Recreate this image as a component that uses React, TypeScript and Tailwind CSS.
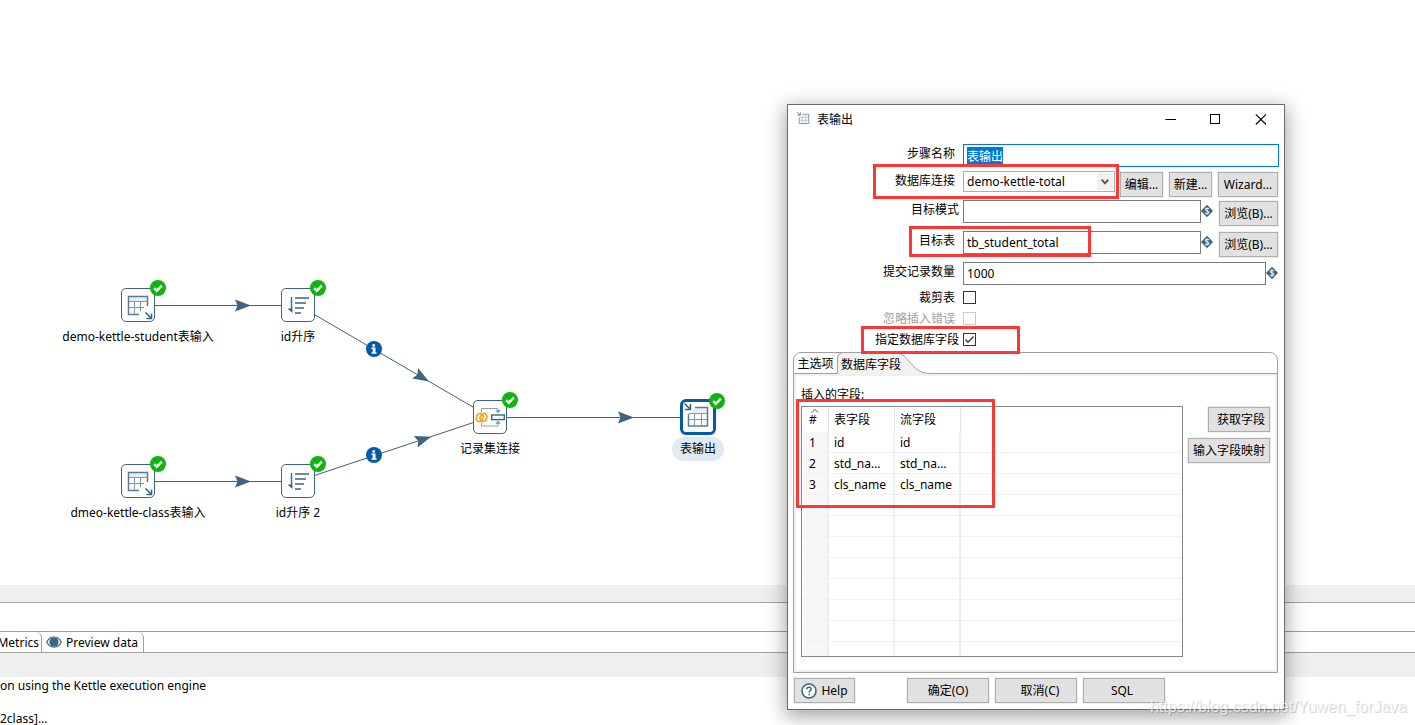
import { useEffect, useRef, type ReactNode } from "react";

const STEEL = "#3d6480";

function StatusBadge() {
  return (
    <svg className="absolute -top-[9px] -right-3 size-4" viewBox="0 0 16 16" aria-hidden="true">
      <circle cx="8" cy="8" r="8" fill="#0fb312" />
      <path d="M4.2 8.2l2.6 2.5 5-5" fill="none" stroke="#fff" strokeWidth="2.4" />
    </svg>
  );
}

function TableInputIcon() {
  return (
    <svg className="size-8" viewBox="0 0 32 32" fill="none" aria-hidden="true">
      <rect x="6.5" y="7.5" width="19" height="5" fill="#e9f1f7" />
      <path d="M17 25.500H6.500V7.500H25.500V17" stroke="#5c7b93" strokeWidth="1.500" />
      <path d="M7 12.500h18M7 18.500h15M12.500 13v12M18.500 13v9" stroke="#7f98ab" />
      <path d="M23.500 23.500l5 5M29.500 24.500v5h-5" stroke={STEEL} strokeWidth="1.600" />
    </svg>
  );
}

function TableOutputIcon({ className }: { className: string }) {
  return (
    <svg className={className} viewBox="0 0 32 32" fill="none" aria-hidden="true">
      <path d="M13 6.500h13v6H9z" fill="#e9f1f7" />
      <path d="M13 6.500h12.500v18.500h-19V13" stroke="#5c7b93" strokeWidth="1.500" />
      <path d="M7 12.500h18M7 18.500h18M12.500 13v12M19.500 13v12" stroke="#7f98ab" />
      <path d="M2.500 2.500l5 5M8.500 3v5.500H3" stroke={STEEL} strokeWidth="1.600" />
    </svg>
  );
}

function SortIcon() {
  return (
    <svg className="size-8" viewBox="0 0 32 32" fill="none" aria-hidden="true">
      <path d="M9.500 8v14" stroke={STEEL} strokeWidth="1.400" />
      <path d="M5.500 19.500h4.800v4.500z" fill={STEEL} />
      <path d="M13 9h14M13 14h11M13 19h9M13 24h6" stroke={STEEL} strokeWidth="1.500" />
    </svg>
  );
}

function JoinIcon() {
  return (
    <svg className="size-8" viewBox="0 0 32 32" fill="none" aria-hidden="true">
      <path d="M7.500 11V7.500H24V10M7.500 22v3H24v-3" stroke="#8ba3b5" />
      <path d="M22 9.500l2 2.500 2-2.500zM22 22.500l2-2.500 2 2.500z" fill="#8ba3b5" stroke="#8ba3b5" />
      <rect x="17.700" y="14" width="12.600" height="4.600" stroke={STEEL} strokeWidth="1.400" />
      <ellipse cx="5.700" cy="16.500" rx="3.300" ry="4.200" stroke="#f7a427" strokeWidth="1.800" transform="rotate(20 5.700 16.500)" />
      <ellipse cx="9.500" cy="16.500" rx="3.300" ry="4.200" stroke="#f7a427" strokeWidth="1.800" transform="rotate(20 9.500 16.500)" />
    </svg>
  );
}

function StepNode({ place, label, selected, children }: { place: string; label: string; selected?: boolean; children: ReactNode }) {
  return (
    <div className={`absolute flex w-44 -translate-x-1/2 flex-col items-center ${place}`}>
      <div
        className={
          selected
            ? "relative flex size-9 items-center justify-center rounded-md border-[3px] border-[#005ca8] bg-white"
            : "relative flex size-[34px] items-center justify-center rounded-[5px] border border-[#3d6480] bg-white"
        }
      >
        {children}
        <StatusBadge />
      </div>
      <span className={selected ? "mt-0.5 rounded-full bg-[#e0eaf4] px-2 leading-6" : "mt-1 leading-[22px]"}>{label}</span>
    </div>
  );
}

function Arrow({ x, y, angle }: { x: number; y: number; angle: number }) {
  return <path d="M0 0L-16 -6L-13.500 0L-16 6Z" fill={STEEL} transform={`translate(${x} ${y}) rotate(${angle})`} />;
}

function InfoDot({ x, y }: { x: number; y: number }) {
  return (
    <g transform={`translate(${x} ${y})`}>
      <circle r="8" fill="#005ca8" />
      <circle cx="-.3" cy="-3.500" r="1.400" fill="#fff" />
      <path d="M-2.500 -1.500h4v4.700h1v1.500h-5v-1.500h1.200v-3.200h-1.200z" fill="#fff" />
    </g>
  );
}

function Canvas() {
  return (
    <section className="relative grow">
      <svg className="absolute inset-0 h-full w-full" fill="none" aria-hidden="true">
        <g stroke={STEEL}>
          <path d="M138 305.500H298M138 481.500H298M490 417.500H698" />
          <path d="M298 305L490 417M298 481L490 417" />
        </g>
        <Arrow x={251} y={305.5} angle={0} />
        <Arrow x={251} y={481.5} angle={0} />
        <Arrow x={634} y={417.5} angle={0} />
        <Arrow x={429} y={381.5} angle={30.3} />
        <Arrow x={431} y={436.7} angle={-18.4} />
        <InfoDot x={374} y={349} />
        <InfoDot x={374} y={455} />
      </svg>
      <StepNode place="left-[138px] top-[288px]" label="demo-kettle-student表输入"><TableInputIcon /></StepNode>
      <StepNode place="left-[298px] top-[288px]" label="id升序"><SortIcon /></StepNode>
      <StepNode place="left-[138px] top-[464px]" label="dmeo-kettle-class表输入"><TableInputIcon /></StepNode>
      <StepNode place="left-[298px] top-[464px]" label="id升序 2"><SortIcon /></StepNode>
      <StepNode place="left-[490px] top-[400px]" label="记录集连接"><JoinIcon /></StepNode>
      <StepNode place="left-[698px] top-[399px]" label="表输出" selected><TableOutputIcon className="size-8 shrink-0" /></StepNode>
    </section>
  );
}

function ResultsPanel() {
  return (
    <section>
      <div className="h-[17px] bg-[#efefef]" />
      <div className="h-[29px] border-t border-[#a0a0a0]" />
      <div className="flex h-[22px] border-y border-[#a0a0a0]">
        <button className="flex w-[42px] items-center justify-end rounded-tr-md border-r border-[#a0a0a0] pt-0.5 pr-0.5">Metrics</button>
        <button className="flex items-center gap-1 rounded-tr-md border-r border-[#a0a0a0] pt-0.5 pr-[5px] pl-1">
          <svg className="mb-0.5 h-3 w-4" viewBox="0 0 16 12" aria-hidden="true">
            <path d="M.700 6C4-.700 12-.700 15.300 6C12 12.700 4 12.700 .700 6z" fill="#fff" stroke={STEEL} strokeWidth="1.200" />
            <circle cx="8" cy="6" r="4.600" fill={STEEL} />
          </svg>
          Preview data
        </button>
      </div>
      <div className="h-6 bg-[#efefef]" />
      <div className="flex h-12 flex-col gap-[18px]">
        <p className="leading-[18px]">on using the Kettle execution engine</p>
        <p className="leading-3">2class]...</p>
      </div>
    </section>
  );
}

function WinButton({ className = "", children }: { className?: string; children: ReactNode }) {
  return (
    <button className={`flex h-[25px] shrink-0 items-center justify-center border border-[#adadad] bg-[#e1e1e1] whitespace-nowrap shadow-[0_0_0_1px_#f0f0f0] ${className}`}>
      {children}
    </button>
  );
}

function Label({ id, wide, muted, children }: { id: string; wide?: boolean; muted?: boolean; children: ReactNode }) {
  return (
    <label htmlFor={id} className={`w-[175px] shrink-0 text-right leading-5 ${wide ? "pr-1" : "pr-2"} ${muted ? "text-[#a0a0a0]" : ""}`}>
      {children}
    </label>
  );
}

function VariableIcon() {
  return (
    <svg className="mt-1 h-3.5 w-3 shrink-0" viewBox="0 0 12 14" aria-hidden="true">
      <path d="M6 .800L12 7L6 13.200L0 7z" fill={STEEL} />
      <path d="M8 5.100C7.400 4 4.300 4 4.300 5.600C4.300 7.300 7.900 6.500 7.900 8.400C7.900 10 4.500 10 3.900 8.800M6 3.300v7.400" fill="none" stroke="#dfe8ef" strokeWidth="1.100" />
    </svg>
  );
}

const field = "h-[23px] min-w-0 flex-1 border border-[#7a7a7a] bg-white px-[3px] outline-none";

function Check({ id, label, checked, disabled, wide }: { id: string; label: string; checked?: boolean; disabled?: boolean; wide?: boolean }) {
  return (
    <div className="flex h-[21px] items-center">
      <Label id={id} wide={wide} muted={disabled}>{label}</Label>
      <span className="relative size-[13px]">
        <input
          id={id}
          type="checkbox"
          defaultChecked={checked}
          disabled={disabled}
          className="peer block size-[13px] appearance-none border border-[#333] bg-white disabled:border-[#ccc]"
        />
        <svg className="pointer-events-none absolute inset-0 hidden size-[13px] peer-checked:block" viewBox="0 0 13 13" fill="none" aria-hidden="true">
          <path d="M2.500 6.500L5 9.200L10.500 3.500" stroke="#333" strokeWidth="1.300" />
        </svg>
      </span>
    </div>
  );
}

const rows = [
  ["1", "id", "id"],
  ["2", "std_na...", "std_na..."],
  ["3", "cls_name", "cls_name"],
  ...Array.from({ length: 8 }, () => ["", "", ""]),
];

function FieldTable() {
  return (
    <div className="h-[251px] w-[382px] overflow-hidden border border-[#828790] px-px">
      <table className="w-full table-fixed border-separate border-spacing-0 text-left">
        <colgroup>
          <col className="w-[26px]" />
          <col className="w-[66px]" />
          <col className="w-[66px]" />
          <col />
        </colgroup>
        <thead>
          <tr className="h-[25px]">
            <th className="relative border-r border-[#e5e5e5] pl-1.5 font-normal">
              #
              <svg className="absolute top-0.5 left-2 h-1 w-2" viewBox="0 0 8 4" fill="none" aria-hidden="true">
                <path d="M.500 3.700L4 .500L7.500 3.700" stroke="#555" />
              </svg>
            </th>
            <th className="border-r border-[#e5e5e5] pl-[5px] font-normal">表字段</th>
            <th className="border-r border-[#e5e5e5] pl-[5px] font-normal">流字段</th>
            <th />
          </tr>
        </thead>
        <tbody>
          {rows.map(([index, column, stream], i) => (
            <tr key={i} className="h-[21px]">
              <td className="border-r-2 border-b border-r-[#e9eff8] border-b-[#f0f0f0] bg-[#f7f7f7] p-0 pt-0.5 pl-1.5">{index}</td>
              <td className="border-r-2 border-b border-r-[#e9eff8] border-b-[#f0f0f0] p-0 pt-0.5 pl-[5px]">{column}</td>
              <td className="border-r-2 border-b border-r-[#e9eff8] border-b-[#f0f0f0] p-0 pt-0.5 pl-[5px]">{stream}</td>
              <td className="border-b border-b-[#f0f0f0] p-0" />
            </tr>
          ))}
        </tbody>
      </table>
    </div>
  );
}

function TabFolder() {
  return (
    <div className="mt-0.5 mr-1.5 ml-[5px] rounded-t-lg border border-[#a0a0a0]">
      <div className="flex h-[21px]">
        <button className="w-[43px] border-b border-[#a0a0a0] pt-0.5">主选项</button>
        <div className="relative w-[92px] shrink-0">
          <svg className="absolute -top-px left-0 h-[22px] w-[92px]" viewBox="0 0 92 22" aria-hidden="true">
            <path d="M.500 22V7Q.500 .500 7 .500H58C72 .500 74 21.500 92 21.500V22z" fill="#f2f2f2" />
            <path d="M.500 22V7Q.500 .500 7 .500H58C72 .500 74 21.500 92 21.500" fill="none" stroke="#a0a0a0" />
          </svg>
          <button className="relative h-full pt-0.5 pl-1">数据库字段</button>
        </div>
        <div className="grow border-b border-[#a0a0a0]" />
      </div>
      <div className="flex gap-1 border-2 border-[#f0f0f0] pb-[13px]">
        <div className="flex shrink-0 flex-col pl-[5px]">
          <h2 className="pt-2.5 pb-0.5 leading-[18px]">插入的字段:</h2>
          <FieldTable />
        </div>
        <div className="flex grow flex-col items-end gap-1.5 pt-[31px] pr-[5px]">
          <WinButton className="w-[62px] pl-1">获取字段</WinButton>
          <WinButton className="w-[82px]">输入字段映射</WinButton>
        </div>
      </div>
    </div>
  );
}

function Dialog() {
  const nameRef = useRef<HTMLInputElement>(null);
  useEffect(() => {
    nameRef.current?.focus();
    nameRef.current?.select();
  }, []);

  return (
    <div role="dialog" aria-label="表输出" className="absolute top-[104px] left-[787px] w-[498px] border border-[#6b6b6b] bg-white shadow-[0_5px_18px_2px_rgba(0,0,0,0.35)]">
      <header className="flex h-[39px] items-start pt-1.5 pl-2">
        <TableOutputIcon className="size-4" />
        <h1 className="ml-[5px] grow leading-[18px]">表输出</h1>
        <div className="flex gap-[29px] pr-[15px]">
          <button aria-label="Minimize" className="p-0.5">
            <svg className="size-3" viewBox="0 0 12 12" fill="none"><path d="M.500 6.500h10.500" stroke="#000" /></svg>
          </button>
          <button aria-label="Maximize" className="p-0.5">
            <svg className="size-3" viewBox="0 0 12 12" fill="none"><rect x=".500" y="1.500" width="9" height="9" stroke="#000" /></svg>
          </button>
          <button aria-label="Close" className="p-0.5">
            <svg className="size-3" viewBox="0 0 12 12" fill="none"><path d="M.800 1.300L11 11.500M11 1.300L.800 11.500" stroke="#000" strokeWidth="1.100" /></svg>
          </button>
        </div>
      </header>

      <form onSubmit={(e) => e.preventDefault()} className="pr-[5px]">
        <div className="flex h-[27px] items-start">
          <Label id="step">步骤名称</Label>
          <input id="step" ref={nameRef} defaultValue="表输出" className="h-[23px] min-w-0 flex-1 border border-[#0078d7] bg-white px-[3px] outline-none selection:bg-[#0078d7] selection:text-white" />
        </div>
        <div className="flex h-[29px] items-start pr-px">
          <Label id="connection">数据库连接</Label>
          <div className="relative flex-1">
            <select id="connection" className="block h-[21px] w-full appearance-none border border-[#adadad] bg-white px-[3px] outline-none">
              <option>demo-kettle-total</option>
            </select>
            <span className="pointer-events-none absolute inset-y-0.5 right-0.5 flex w-4 items-center justify-center bg-[#f0f0f0]">
              <svg className="h-1.5 w-2" viewBox="0 0 8 6" fill="none" aria-hidden="true">
                <path d="M.700 .700L4 4.300L7.300 .700" stroke="#555" strokeWidth="1.800" />
              </svg>
            </span>
          </div>
          <div className="mt-px ml-[5px] flex gap-1.5">
            <WinButton className="w-[43px]">编辑...</WinButton>
            <WinButton className="w-[43px]">新建...</WinButton>
            <WinButton className="w-[60px]">Wizard...</WinButton>
          </div>
        </div>
        <div className="flex h-[31px] items-start pr-px">
          <Label id="schema" wide>目标模式</Label>
          <input id="schema" className={field} />
          <VariableIcon />
          <WinButton className="mt-px ml-1.5 w-[59px]">浏览(B)...</WinButton>
        </div>
        <div className="flex h-[31px] items-start pr-px">
          <Label id="table">目标表</Label>
          <input id="table" defaultValue="tb_student_total" className={field} />
          <VariableIcon />
          <WinButton className="mt-px ml-1.5 w-[59px]">浏览(B)...</WinButton>
        </div>
        <div className="flex h-[25px] items-start pr-px">
          <Label id="commit">提交记录数量</Label>
          <input id="commit" defaultValue="1000" className={field} />
          <VariableIcon />
        </div>
        <Check id="truncate" label="裁剪表" />
        <Check id="ignore" label="忽略插入错误" disabled />
        <Check id="specify" label="指定数据库字段" checked wide />
      </form>

      <TabFolder />

      <footer className="flex gap-1.5 pt-[5px] pb-1.5 pl-1.5">
        <WinButton className="mr-[46px] w-[61px] gap-1">
          <svg className="size-4" viewBox="0 0 16 16" fill="none" aria-hidden="true">
            <circle cx="8" cy="8" r="7" stroke={STEEL} strokeWidth="1.600" fill="#fff" />
            <path d="M5.800 6.300C5.900 3.500 10.300 3.700 10.200 6.200C10.100 7.700 8.200 7.700 8.100 9.500M8.100 10.700v1.600" stroke={STEEL} strokeWidth="1.500" />
          </svg>
          Help
        </WinButton>
        <WinButton className="w-[82px]">确定(O)</WinButton>
        <WinButton className="w-[82px] pl-2">取消(C)</WinButton>
        <WinButton className="w-[82px] pr-1">SQL</WinButton>
      </footer>

      <div className="pointer-events-none absolute top-[59px] left-[85px] h-[35px] w-[246px] border-[3px] border-[#fb3836]" />
      <div className="pointer-events-none absolute top-[121px] left-[121px] h-[31px] w-[182px] border-[3px] border-[#fb3836]" />
      <div className="pointer-events-none absolute top-[221px] left-[73px] h-[28px] w-[159px] border-[3px] border-[#fb3836]" />
      <div className="pointer-events-none absolute top-[294px] left-2 h-[109px] w-[199px] border-[3px] border-[#fb3836]" />
    </div>
  );
}

export default function App() {
  return (
    <main className="relative flex min-h-screen flex-col overflow-hidden bg-white font-['Noto_Sans','Noto_Sans_CJK_SC',sans-serif] text-xs text-black">
      <Canvas />
      <ResultsPanel />
      <Dialog />
      <p className="pointer-events-none absolute right-2 bottom-2 font-['Liberation_Sans',sans-serif] text-base leading-5 text-white/70 [text-shadow:1px_1px_1px_rgba(0,0,0,0.2)]">
        https://blog.csdn.net/Yuwen_forJava
      </p>
    </main>
  );
}
